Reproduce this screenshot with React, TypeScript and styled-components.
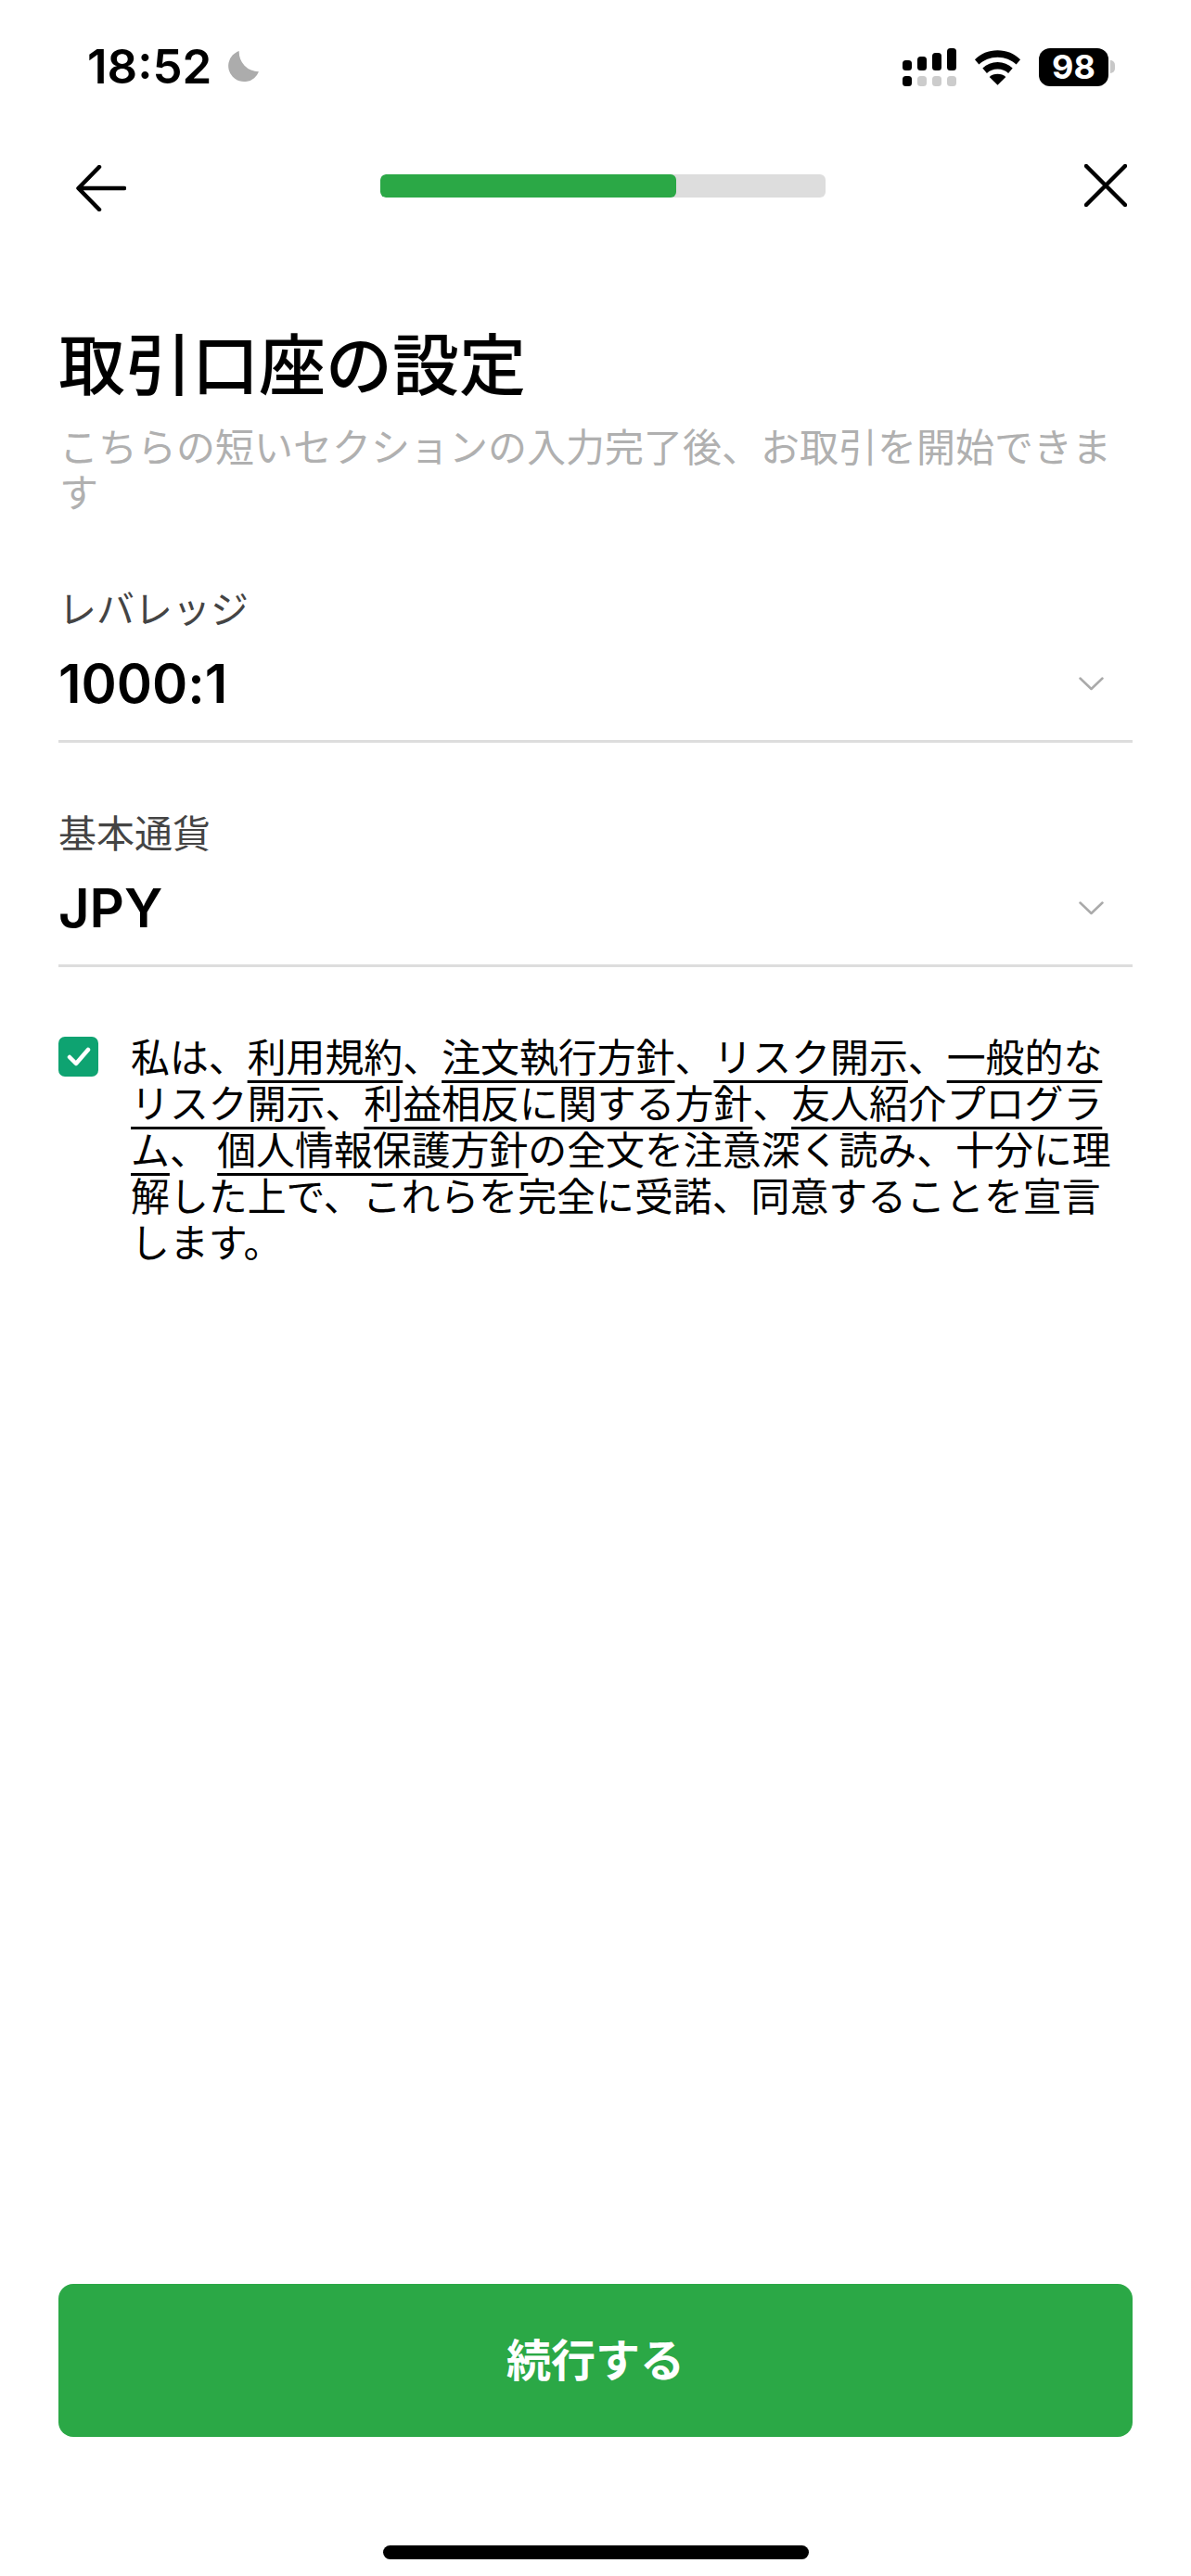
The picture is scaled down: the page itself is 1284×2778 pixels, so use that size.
import React from 'react';
import styled, { createGlobalStyle } from 'styled-components';

const GlobalStyle = createGlobalStyle`
  html, body {
    margin: 0;
    padding: 0;
    background: #fff;
  }
  * {
    box-sizing: border-box;
  }
`;

const latin = `Inter, "Noto Sans CJK JP", sans-serif`;
const jp = `"Noto Sans CJK JP", sans-serif`;
const green = '#2ba846';

const Page = styled.div`
  width: 1284px;
  height: 2778px;
  display: flex;
  flex-direction: column;
  background: #fff;
  color: #000;
  font-family: ${jp};
`;

const StatusBar = styled.div`
  height: 144px;
  padding: 46px 89px 0 94px;
  display: flex;
  justify-content: space-between;
  align-items: flex-start;
  flex-shrink: 0;
`;

const TimeGroup = styled.div`
  display: flex;
  align-items: center;
  gap: 17px;
`;

const Time = styled.span`
  font-family: ${latin};
  font-size: 51px;
  line-height: 52px;
  font-weight: 600;
`;

const StatusIcons = styled.div`
  display: flex;
  align-items: center;
  gap: 19px;
  padding-top: 6px;
`;

const Battery = styled.div`
  position: relative;
  width: 75px;
  height: 41px;
  border-radius: 12px;
  background: #000;
  color: #fff;
  font-family: ${latin};
  font-size: 36px;
  font-weight: 700;
  line-height: 41px;
  text-align: center;

  &::after {
    content: '';
    position: absolute;
    left: 77px;
    top: 13px;
    width: 5px;
    height: 14px;
    border-radius: 0 7px 7px 0;
    background: #c8c8c8;
  }
`;

const NavBar = styled.div`
  height: 112px;
  padding: 0 60px 0 77px;
  display: flex;
  align-items: center;
  justify-content: space-between;
  flex-shrink: 0;
`;

const NavButton = styled.div`
  width: 64px;
  height: 64px;
  display: flex;
  align-items: center;
  justify-content: center;
`;

const BackButton = styled(NavButton)`
  padding-top: 5px;
`;

const Track = styled.div`
  width: 480px;
  height: 25px;
  margin-left: -1px;
  border-radius: 6px;
  background: #dddddd;
  overflow: hidden;
`;

const Fill = styled.div`
  height: 100%;
  border-radius: 6px;
  background: ${green};
`;

const Content = styled.main`
  flex: 1;
  padding: 88px 63px 0;
  display: flex;
  flex-direction: column;
`;

const Title = styled.h1`
  margin: 0;
  font-size: 72px;
  line-height: 90px;
  font-weight: 500;
`;

const Subtitle = styled.p`
  margin: 21px 0 76px;
  padding-left: 1px;
  font-size: 42px;
  line-height: 49px;
  color: #b0b0b0;
`;

const Field = styled.div`
  margin-bottom: 70px;
  border-bottom: 3px solid #dddddd;
  padding-bottom: 30px;
`;

const FieldLabel = styled.div`
  font-size: 41px;
  line-height: 50px;
  color: #444;
  margin-bottom: 27px;
`;

const FieldRow = styled.div`
  display: flex;
  align-items: center;
  justify-content: space-between;
  padding-right: 31px;
`;

const FieldValue = styled.span`
  font-family: ${latin};
  font-size: 58px;
  line-height: 62px;
  font-weight: 600;
  font-feature-settings: 'calt' 0;
`;

const Consent = styled.div`
  display: flex;
  align-items: flex-start;
  gap: 35px;
  margin-top: 0;
`;

const CheckBox = styled.div`
  width: 43px;
  height: 43px;
  flex-shrink: 0;
  margin-top: 5px;
  border-radius: 7px;
  background: #0ea371;
  display: flex;
  align-items: center;
  justify-content: center;
`;

const ConsentText = styled.p`
  margin: 0;
  width: 1082px;
  font-size: 41.9px;
  line-height: 50px;
  color: #000;
`;

const DocLink = styled.span`
  text-decoration: underline;
  text-decoration-thickness: 3px;
  text-underline-offset: 9px;
`;

const Footer = styled.div`
  padding: 0 63px;
  flex-shrink: 0;
`;

const ContinueButton = styled.button`
  width: 100%;
  height: 165px;
  margin-top: 1px;
  padding: 0 0 8px;
  border: none;
  border-radius: 16px;
  background: ${green};
  color: #fff;
  font-family: ${jp};
  font-size: 48px;
  font-weight: 600;
`;

const HomeBar = styled.div`
  height: 150px;
  display: flex;
  align-items: flex-start;
  justify-content: center;
  padding-top: 117px;
  flex-shrink: 0;
`;

const HomeIndicator = styled.div`
  width: 459px;
  height: 15px;
  border-radius: 8px;
  background: #000;
`;

function Moon() {
  return (
    <svg width="34" height="34" viewBox="0 0 32 32">
      <path d="M12 0A16 16 0 1 0 32 21A20 20 0 0 1 12 0z" fill="#acacac" />
    </svg>
  );
}

const signalBars = [
  { x: 0, y: 13, h: 11 },
  { x: 16, y: 9, h: 15 },
  { x: 32, y: 5, h: 19 },
  { x: 48, y: 0, h: 24 },
];

function Signal() {
  return (
    <svg width="58" height="41" viewBox="0 0 58 41">
      {signalBars.map((b) => (
        <rect key={b.x} x={b.x} y={b.y} width="10" height={b.h} rx="3.500" fill="#000" />
      ))}
      {signalBars.map((b, i) => (
        <rect key={b.x} x={b.x} y="30" width="10" height="11" rx="3.500" fill={i === 0 ? '#000' : '#cccccc'} />
      ))}
    </svg>
  );
}

function Wifi() {
  return (
    <svg width="51" height="38" viewBox="0 0 52 38">
      <path d="M26 0C16 0 7.500 3.800 1 10l4.500 5.500C11 10.500 18 7.500 26 7.500s15 3 20.500 8L51 10C44.500 3.800 36 0 26 0z" fill="#000" />
      <path d="M26 13c-6.500 0-12 2.300-16.500 6.500l4.700 5.500c3-2.800 7-4.500 11.800-4.500s8.800 1.700 11.800 4.500l4.700-5.500C38 15.300 32.500 13 26 13z" fill="#000" />
      <path d="M26 26c-3.600 0-6.600 1.200-9 3.200L26 38l9-8.800c-2.400-2-5.400-3.200-9-3.200z" fill="#000" />
    </svg>
  );
}

function Chevron() {
  return (
    <svg width="27" height="15" viewBox="0 0 27 15" fill="none">
      <path d="M1.500 1.500 13.500 13 25.500 1.500" stroke="#aaaaaa" strokeWidth="2.500" strokeLinecap="round" strokeLinejoin="round" />
    </svg>
  );
}

function SelectField({ label, value }: { label: string; value: string }) {
  return (
    <Field>
      <FieldLabel>{label}</FieldLabel>
      <FieldRow>
        <FieldValue>{value}</FieldValue>
        <Chevron />
      </FieldRow>
    </Field>
  );
}

export default function App() {
  const progress = (319 / 480) * 100;

  return (
    <Page>
      <GlobalStyle />
      <StatusBar>
        <TimeGroup>
          <Time>18:52</Time>
          <Moon />
        </TimeGroup>
        <StatusIcons>
          <Signal />
          <Wifi />
          <Battery>98</Battery>
        </StatusIcons>
      </StatusBar>

      <NavBar>
        <BackButton>
          <svg width="54" height="50" viewBox="0 0 54 50" fill="none">
            <path d="M52 25H3M25 2 2.500 25 25 48" stroke="#000" strokeWidth="4.500" strokeLinecap="round" strokeLinejoin="round" />
          </svg>
        </BackButton>
        <Track>
          <Fill style={{ width: `${progress}%` }} />
        </Track>
        <NavButton>
          <svg width="46" height="46" viewBox="0 0 46 46" fill="none">
            <path d="M2 2 44 44M44 2 2 44" stroke="#000" strokeWidth="4.500" strokeLinecap="round" />
          </svg>
        </NavButton>
      </NavBar>

      <Content>
        <Title>取引口座の設定</Title>
        <Subtitle>こちらの短いセクションの入力完了後、お取引を開始できます</Subtitle>
        <SelectField label="レバレッジ" value="1000:1" />
        <SelectField label="基本通貨" value="JPY" />
        <Consent>
          <CheckBox>
            <svg width="26" height="21" viewBox="0 0 26 21" fill="none">
              <path d="M3 11 10 18 23 3" stroke="#fff" strokeWidth="4.500" strokeLinecap="round" strokeLinejoin="round" />
            </svg>
          </CheckBox>
          <ConsentText>
            私は、<DocLink>利用規約</DocLink>、<DocLink>注文執行方針</DocLink>、<DocLink>リスク開示</DocLink>、<DocLink>一般的なリスク開示</DocLink>、<DocLink>利益相反に関する方針</DocLink>、<DocLink>友人紹介プログラム</DocLink>、 <DocLink>個人情報保護方針</DocLink>の全文を注意深く読み、十分に理解した上で、これらを完全に受諾、同意することを宣言します。
          </ConsentText>
        </Consent>
      </Content>

      <Footer>
        <ContinueButton>続行する</ContinueButton>
      </Footer>
      <HomeBar>
        <HomeIndicator />
      </HomeBar>
    </Page>
  );
}
